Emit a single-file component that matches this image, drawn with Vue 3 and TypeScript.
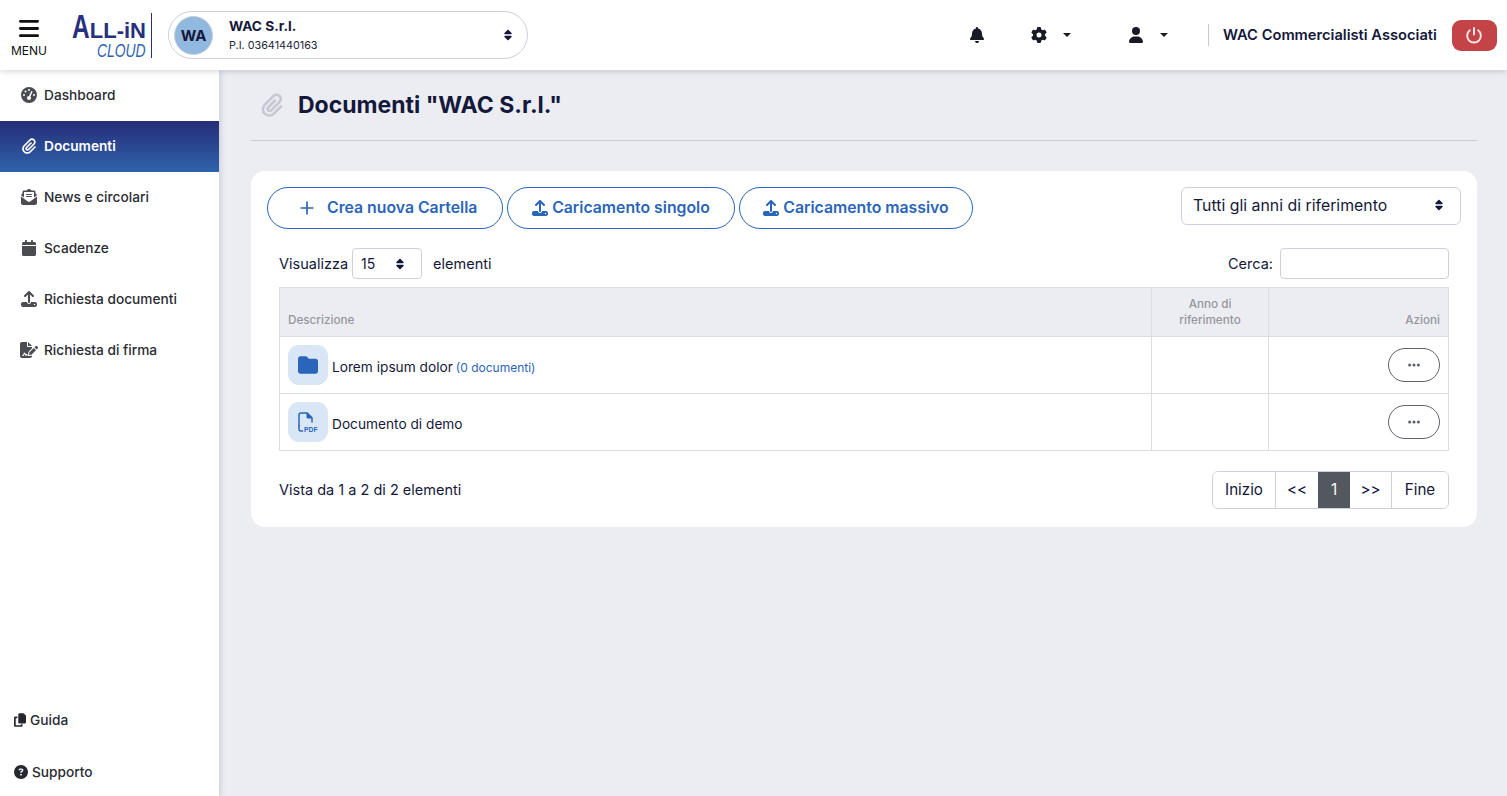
<script setup lang="ts">
const icons: Record<string, { box: string; d: string }> = {
  bars: { box: '0 0 448 512', d: 'M0 96C0 78.3 14.3 64 32 64H416c17.7 0 32 14.3 32 32s-14.3 32-32 32H32C14.3 128 0 113.7 0 96zM0 256c0-17.7 14.3-32 32-32H416c17.7 0 32 14.3 32 32s-14.3 32-32 32H32c-17.7 0-32-14.3-32-32zM448 416c0 17.7-14.3 32-32 32H32c-17.7 0-32-14.3-32-32s14.3-32 32-32H416c17.7 0 32 14.3 32 32z' },
  clip: { box: '0 0 448 512', d: 'M364.2 83.8c-24.4-24.4-64-24.4-88.4 0l-184 184c-42.1 42.1-42.1 110.3 0 152.4s110.3 42.1 152.4 0l152-152c10.9-10.9 28.7-10.9 39.6 0s10.9 28.7 0 39.6l-152 152c-64 64-167.6 64-231.6 0s-64-167.6 0-231.6l184-184c46.3-46.3 121.3-46.3 167.6 0s46.3 121.3 0 167.6l-176 176c-28.6 28.6-75 28.6-103.6 0s-28.6-75 0-103.6l144-144c10.9-10.9 28.7-10.9 39.6 0s10.9 28.7 0 39.6l-144 144c-6.7 6.7-6.7 17.7 0 24.4s17.7 6.7 24.4 0l176-176c24.4-24.4 24.4-64 0-88.4z' },
  bell: { box: '0 0 448 512', d: 'M224 0c-17.7 0-32 14.3-32 32V51.2C119 66 64 130.6 64 208v18.8c0 47-17.3 92.4-48.5 127.6l-7.4 8.3c-8.4 9.4-10.4 22.9-5.3 34.4S19.4 416 32 416H416c12.6 0 24-7.4 29.2-18.9s3.1-25-5.3-34.4l-7.4-8.3C401.3 319.2 384 273.9 384 226.8V208c0-77.4-55-142-128-156.8V32c0-17.7-14.3-32-32-32zm45.3 493.3c12-12 18.7-28.3 18.7-45.3H224 160c0 17 6.7 33.3 18.7 45.3s28.3 18.7 45.3 18.7s33.3-6.7 45.3-18.7z' },
  gear: { box: '0 0 512 512', d: 'M495.9 166.6c3.2 8.7 .5 18.4-6.4 24.6l-43.3 39.4c1.1 8.3 1.7 16.8 1.7 25.4s-.6 17.1-1.7 25.4l43.3 39.4c6.9 6.2 9.6 15.9 6.4 24.6c-4.4 11.9-9.7 23.3-15.8 34.3l-4.7 8.1c-6.6 11-14 21.4-22.1 31.2c-5.9 7.2-15.7 9.6-24.5 6.8l-55.7-17.7c-13.4 10.3-28.2 18.9-44 25.4l-12.5 57.1c-2 9.1-9 16.3-18.2 17.8c-13.8 2.3-28 3.5-42.5 3.5s-28.7-1.2-42.5-3.5c-9.2-1.5-16.2-8.7-18.2-17.8l-12.5-57.1c-15.8-6.5-30.6-15.1-44-25.4L83.1 425.9c-8.8 2.8-18.6 .3-24.5-6.8c-8.1-9.8-15.5-20.2-22.1-31.2l-4.7-8.1c-6.1-11-11.4-22.4-15.8-34.3c-3.2-8.7-.5-18.4 6.4-24.6l43.3-39.4C64.6 273.1 64 264.6 64 256s.6-17.1 1.7-25.4L22.4 191.2c-6.9-6.2-9.6-15.9-6.4-24.6c4.4-11.9 9.7-23.3 15.8-34.3l4.7-8.1c6.6-11 14-21.4 22.1-31.2c5.9-7.2 15.7-9.6 24.5-6.8l55.7 17.7c13.4-10.3 28.2-18.9 44-25.4l12.5-57.1c2-9.1 9-16.3 18.2-17.8C227.3 1.2 241.5 0 256 0s28.7 1.2 42.5 3.5c9.2 1.5 16.2 8.7 18.2 17.8l12.5 57.1c15.8 6.5 30.6 15.1 44 25.4l55.7-17.7c8.8-2.8 18.6-.3 24.5 6.8c8.1 9.8 15.5 20.2 22.1 31.2l4.7 8.1c6.1 11 11.4 22.4 15.8 34.3zM256 336a80 80 0 1 0 0-160 80 80 0 1 0 0 160z' },
  user: { box: '0 0 448 512', d: 'M224 256A128 128 0 1 0 224 0a128 128 0 1 0 0 256zm-45.7 48C79.8 304 0 383.8 0 482.3C0 498.7 13.3 512 29.7 512H418.3c16.4 0 29.7-13.3 29.7-29.7C448 383.8 368.2 304 269.7 304H178.3z' },
  folder: { box: '0 0 512 512', d: 'M64 480H448c35.3 0 64-28.7 64-64V160c0-35.3-28.7-64-64-64H288c-10.1 0-19.6-4.7-25.6-12.8L243.2 57.6C231.1 41.5 212.1 32 192 32H64C28.7 32 0 60.7 0 96V416c0 35.3 28.7 64 64 64z' },
  calendar: { box: '0 0 448 512', d: 'M96 32V64H48C21.5 64 0 85.5 0 112v48H448V112c0-26.5-21.5-48-48-48H352V32c0-17.7-14.3-32-32-32s-32 14.3-32 32V64H160V32c0-17.7-14.3-32-32-32S96 14.3 96 32zM448 192H0V464c0 26.5 21.5 48 48 48H400c26.5 0 48-21.5 48-48V192z' },
  gauge: { box: '0 0 512 512', d: 'M256 0a256 256 0 1 1 0 512A256 256 0 1 1 256 0zM288 96a32 32 0 1 0 -64 0 32 32 0 1 0 64 0zM256 416c35.3 0 64-28.7 64-64c0-17.4-6.9-33.1-18.1-44.6L366 161.7c5.3-12.1-.2-26.3-12.3-31.6s-26.3 .2-31.6 12.3L257.9 288c-.6 0-1.3 0-1.9 0c-35.3 0-64 28.7-64 64s28.7 64 64 64zM176 144a32 32 0 1 0 -64 0 32 32 0 1 0 64 0zM96 288a32 32 0 1 0 0-64 32 32 0 1 0 0 64zm352-32a32 32 0 1 0 -64 0 32 32 0 1 0 64 0z' },
  news: { box: '0 0 512 512', d: 'M215.4 96H144 107.8 96v8.8V144v40.4 89L.2 202.5c1.6-18.1 10.9-34.9 25.7-45.8L48 140.3V96c0-26.5 21.5-48 48-48h76.6l49.9-36.9C232.2 3.9 243.9 0 256 0s23.8 3.9 33.5 11L339.4 48H416c26.5 0 48 21.5 48 48v44.3l22.1 16.4c14.8 10.9 24.1 27.7 25.7 45.8L416 273.4v-89V144 104.8 96H404.2 368 296.6 215.4zM0 448V242.1L217.6 403.3c11.1 8.2 24.6 12.7 38.4 12.7s27.3-4.4 38.4-12.7L512 242.1V448v0c0 35.3-28.7 64-64 64H64c-35.3 0-64-28.7-64-64v0zM176 160H336c8.8 0 16 7.2 16 16s-7.2 16-16 16H176c-8.8 0-16-7.2-16-16s7.2-16 16-16zm0 64H336c8.8 0 16 7.2 16 16s-7.2 16-16 16H176c-8.8 0-16-7.2-16-16s7.2-16 16-16z' },
  upload: { box: '0 0 512 512', d: 'M288 109.3V352c0 17.7-14.3 32-32 32s-32-14.3-32-32V109.3l-73.4 73.4c-12.5 12.5-32.8 12.5-45.3 0s-12.5-32.8 0-45.3l128-128c12.5-12.5 32.8-12.5 45.3 0l128 128c12.5 12.5 12.5 32.8 0 45.3s-32.8 12.5-45.3 0L288 109.3zM64 352H192c0 35.3 28.7 64 64 64s64-28.7 64-64H448c35.3 0 64 28.7 64 64v32c0 35.3-28.7 64-64 64H64c-35.3 0-64-28.7-64-64V416c0-35.3 28.7-64 64-64zM432 456a24 24 0 1 0 0-48 24 24 0 1 0 0 48z' },
  sign: { box: '0 0 576 512', d: 'M64 0C28.7 0 0 28.7 0 64V448c0 35.3 28.7 64 64 64H320c35.3 0 64-28.7 64-64V428.7c-2.7 1.1-5.4 2-8.2 2.7l-60.1 15c-3 .7-6 1.2-9 1.3c-1.8 .2-3.6 .3-5.4 .3H256c-6.1 0-11.6-3.4-14.3-8.8l-8.8-17.7c-1.7-3.4-5.1-5.5-8.8-5.5s-7.2 2.1-8.8 5.5l-8.8 17.7c-2.9 5.9-9.2 9.4-15.7 8.8s-12.1-5.1-13.9-11.3L144 381l-9.8 32.8c-6.1 20.3-24.8 34.2-46 34.2H80c-8.8 0-16-7.2-16-16s7.2-16 16-16h8.2c7.1 0 13.3-4.6 15.3-11.4l14.9-49.5c3.4-11.3 13.8-19.1 25.6-19.1s22.2 7.8 25.6 19.1l11.6 38.6c7.4-6.2 16.8-9.7 26.8-9.7c15.9 0 30.4 9 37.5 23.2l4.4 8.8h8.9c-3.1-8.8-3.7-18.4-1.4-27.8l15-60.1c2.8-11.3 8.6-21.5 16.9-29.7L384 203.6V160H256c-17.7 0-32-14.3-32-32V0H64zM256 0V128H384L256 0zM549.8 139.7c-15.6-15.6-40.9-15.6-56.6 0l-29.4 29.4 71 71 29.4-29.4c15.6-15.6 15.6-40.9 0-56.6l-14.4-14.4zM311.9 321c-4.1 4.1-7 9.2-8.4 14.9l-15 60.1c-1.4 5.5 .2 11.2 4.2 15.2s9.7 5.6 15.2 4.2l60.1-15c5.6-1.4 10.8-4.3 14.9-8.4L512.1 262.7l-71-71L311.9 321z' },
  copy: { box: '0 0 448 512', d: 'M208 0H332.1c12.7 0 24.9 5.1 33.9 14.1l67.9 67.9c9 9 14.1 21.2 14.1 33.9V336c0 26.5-21.5 48-48 48H208c-26.5 0-48-21.5-48-48V48c0-26.5 21.5-48 48-48zM48 128h80v64H64V448H256V416h64v48c0 26.5-21.5 48-48 48H48c-26.5 0-48-21.5-48-48V176c0-26.5 21.5-48 48-48z' },
  help: { box: '0 0 512 512', d: 'M256 512A256 256 0 1 0 256 0a256 256 0 1 0 0 512zM169.8 165.3c7.9-22.3 29.1-37.3 52.8-37.3h58.3c34.9 0 63.1 28.3 63.1 63.1c0 22.6-12.1 43.5-31.7 54.8L280 264.4c-.2 13-10.9 23.6-24 23.6c-13.3 0-24-10.7-24-24V250.5c0-8.6 4.6-16.5 12.1-20.8l44.3-25.4c4.7-2.7 7.6-7.7 7.6-13.1c0-8.4-6.8-15.1-15.1-15.1H222.6c-3.4 0-6.4 2.1-7.5 5.3l-.4 1.2c-4.4 12.5-18.2 19-30.6 14.6s-19-18.2-14.6-30.6l.4-1.2zM224 352a32 32 0 1 1 64 0 32 32 0 1 1 -64 0z' },
  sort: { box: '0 0 320 512', d: 'M137.4 41.4c12.5-12.5 32.8-12.5 45.3 0l128 128c9.2 9.2 11.9 22.9 6.9 34.9s-16.6 19.8-29.6 19.8H32c-12.9 0-24.6-7.8-29.6-19.8s-2.2-25.7 6.9-34.9l128-128zm0 429.3l-128-128c-9.2-9.2-11.9-22.9-6.9-34.9s16.6-19.8 29.6-19.8H288c12.9 0 24.6 7.8 29.6 19.8s2.2 25.7-6.9 34.9l-128 128c-12.5 12.5-32.8 12.5-45.3 0z' },
  dots: { box: '0 0 448 512', d: 'M8 256a56 56 0 1 1 112 0A56 56 0 1 1 8 256zm160 0a56 56 0 1 1 112 0 56 56 0 1 1 -112 0zm216-56a56 56 0 1 1 0 112 56 56 0 1 1 0-112z' },
  plus: { box: '0 0 448 512', d: 'M224 64c-13 0-24 11-24 24V232H56c-13 0-24 11-24 24s11 24 24 24H200V424c0 13 11 24 24 24s24-11 24-24V280H392c13 0 24-11 24-24s-11-24-24-24H248V88c0-13-11-24-24-24z' }
}

const navItems = [
  { label: 'Dashboard', icon: 'gauge' },
  { label: 'Documenti', icon: 'clip', active: true },
  { label: 'News e circolari', icon: 'news' },
  { label: 'Scadenze', icon: 'calendar' },
  { label: 'Richiesta documenti', icon: 'upload' },
  { label: 'Richiesta di firma', icon: 'sign' }
]
const pages = [
  { label: 'Inizio', w: 62 },
  { label: '<<', w: 43 },
  { label: '1', w: 32, active: true },
  { label: '>>', w: 41 },
  { label: 'Fine', w: 57 }
]
</script>

<template>
  <div class="app">
    <header class="topbar">
      <div class="menu">
        <svg class="menu-icon" :viewBox="icons.bars.box"><path :d="icons.bars.d" /></svg>
        <span>MENU</span>
      </div>
      <div class="logo">
        <div class="logo-main"><span class="logo-a">A</span>LL-iN</div>
        <div class="logo-sub"><span>CLOUD</span></div>
      </div>
      <div class="company">
        <div class="avatar">WA</div>
        <div class="company-text">
          <strong>WAC S.r.l.</strong>
          <small>P.I. 03641440163</small>
        </div>
        <svg class="sort company-sort" :viewBox="icons.sort.box"><path :d="icons.sort.d" /></svg>
      </div>
      <div class="top-actions">
        <svg class="top-icon bell" :viewBox="icons.bell.box"><path :d="icons.bell.d" /></svg>
        <svg class="top-icon gear" :viewBox="icons.gear.box"><path :d="icons.gear.d" /></svg>
        <i class="caret gear-caret"></i>
        <svg class="top-icon user" :viewBox="icons.user.box"><path :d="icons.user.d" /></svg>
        <i class="caret user-caret"></i>
        <div class="studio">WAC Commercialisti Associati</div>
        <button class="power" aria-label="Esci">
          <svg viewBox="0 0 24 24"><path d="M12 3.500v8M7 6.400a8.200 8.200 0 1 0 10 0" /></svg>
        </button>
      </div>
    </header>

    <div class="body">
      <aside class="sidebar">
        <nav>
          <a v-for="item in navItems" :key="item.label" class="nav-item" :class="{ active: item.active }">
            <svg class="nav-icon" :class="'ni-' + item.icon" :viewBox="icons[item.icon].box"><path :d="icons[item.icon].d" /></svg>
            <span>{{ item.label }}</span>
          </a>
        </nav>
        <div class="side-foot">
          <a class="foot-item">
            <svg class="guide-icon" :viewBox="icons.copy.box"><path :d="icons.copy.d" /></svg>
            <span>Guida</span>
          </a>
          <a class="foot-item">
            <svg class="help-icon" :viewBox="icons.help.box"><path :d="icons.help.d" /></svg>
            <span>Supporto</span>
          </a>
        </div>
      </aside>

      <main class="main">
        <div class="page-head">
          <svg class="head-icon" :viewBox="icons.clip.box"><path :d="icons.clip.d" /></svg>
          <h1>Documenti "WAC S.r.l."</h1>
        </div>
        <section class="card">
          <div class="toolbar">
            <button class="pill first">
              <svg class="plus" :viewBox="icons.plus.box"><path :d="icons.plus.d" /></svg>
              <span>Crea nuova Cartella</span>
            </button>
            <button class="pill second">
              <svg class="up" :viewBox="icons.upload.box"><path :d="icons.upload.d" /></svg>
              <span>Caricamento singolo</span>
            </button>
            <button class="pill third">
              <svg class="up" :viewBox="icons.upload.box"><path :d="icons.upload.d" /></svg>
              <span>Caricamento massivo</span>
            </button>
            <div class="year-select">
              <span>Tutti gli anni di riferimento</span>
              <svg class="sort" :viewBox="icons.sort.box"><path :d="icons.sort.d" /></svg>
            </div>
          </div>

          <div class="table-wrap">
            <div class="controls">
              <div class="length">
                <span>Visualizza</span>
                <div class="length-select">
                  <span>15</span>
                  <svg class="sort" :viewBox="icons.sort.box"><path :d="icons.sort.d" /></svg>
                </div>
                <span class="len-after">elementi</span>
              </div>
              <label class="search">
                <span>Cerca:</span>
                <input type="text" />
              </label>
            </div>

            <table>
              <colgroup>
                <col class="c1" />
                <col class="c2" />
                <col />
              </colgroup>
              <thead>
                <tr>
                  <th>Descrizione</th>
                  <th class="center">Anno di<br />riferimento</th>
                  <th class="right">Azioni</th>
                </tr>
              </thead>
              <tbody>
                <tr>
                  <td>
                    <div class="doc">
                      <div class="doc-icon">
                        <svg class="folder" :viewBox="icons.folder.box"><path :d="icons.folder.d" /></svg>
                      </div>
                      <span class="doc-name">Lorem ipsum dolor</span>
                      <a class="count">(0 documenti)</a>
                    </div>
                  </td>
                  <td></td>
                  <td class="right">
                    <button class="more"><svg :viewBox="icons.dots.box"><path :d="icons.dots.d" /></svg></button>
                  </td>
                </tr>
                <tr>
                  <td>
                    <div class="doc">
                      <div class="doc-icon">
                        <svg class="pdf" viewBox="0 0 20 20">
                          <path class="pdf-line" d="M1 14V3a2 2 0 0 1 2-2h6l5 5v4" />
                          <path class="pdf-fill" d="M8.500 .500h1L14.500 5.500v1H10a1.500 1.500 0 0 1-1.500-1.500z" />
                          <path class="pdf-line" d="M1 14v3a2 2 0 0 0 2 2h1.500" />
                          <text x="6" y="19.800" class="pdf-text" textLength="13.500" lengthAdjust="spacingAndGlyphs">PDF</text>
                        </svg>
                      </div>
                      <span class="doc-name">Documento di demo</span>
                    </div>
                  </td>
                  <td></td>
                  <td class="right">
                    <button class="more"><svg :viewBox="icons.dots.box"><path :d="icons.dots.d" /></svg></button>
                  </td>
                </tr>
              </tbody>
            </table>

            <div class="foot">
              <span>Vista da 1 a 2 di 2 elementi</span>
              <div class="pager">
                <button
                  v-for="p in pages"
                  :key="p.label"
                  :class="{ active: p.active }"
                  :style="{ width: p.w + 'px' }"
                >{{ p.label }}</button>
              </div>
            </div>
          </div>
        </section>
      </main>
    </div>
  </div>
</template>

<style>
html, body { margin: 0; background: #ecedf3; }
</style>

<style scoped>
* { box-sizing: border-box; }
.app {
  height: 100vh;
  min-height: 796px;
  overflow: hidden;
  display: flex;
  flex-direction: column;
  font-family: Inter, "Liberation Sans", sans-serif;
  color: #14183a;
  background: #ecedf3;
}
svg { display: block; fill: currentColor; }

.topbar {
  height: 70px;
  flex: none;
  display: flex;
  align-items: center;
  background: #fff;
  box-shadow: 0 1px 6px rgba(40, 44, 70, 0.22);
  position: relative;
  z-index: 3;
}
.menu {
  width: 58px;
  flex: none;
  display: flex;
  flex-direction: column;
  align-items: center;
  color: #111;
  font-size: 12px;
  line-height: 14px;
  padding-top: 4px;
}
.menu-icon { width: 20px; height: 23px; margin-bottom: 4px; }
.logo {
  width: 94px;
  height: 45px;
  flex: none;
  margin: 0 16px 0 0;
  padding-right: 5px;
  border-right: 1px solid #27307c;
  font-family: "Liberation Sans", sans-serif;
  text-align: right;
}
.logo-main {
  height: 28px;
  color: #27307c;
  font-size: 22px;
  line-height: 35px;
  font-weight: 700;
  white-space: nowrap;
}
.logo-a {
  display: inline-block;
  width: 18px;
  font-size: 34px;
  line-height: 0;
  text-align: left;
  transform: scaleX(0.72);
  transform-origin: 0 50%;
}
.logo-sub {
  height: 17px;
  color: #2d64b4;
  font-size: 19px;
  line-height: 19px;
  font-style: italic;
}
.logo-sub span { display: inline-block; transform: scaleX(0.73); transform-origin: 100% 50%; }
.company {
  width: 360px;
  height: 48px;
  flex: none;
  display: flex;
  align-items: center;
  border: 1px solid #ced0db;
  border-radius: 24px;
  padding: 0 15px 0 5px;
}
.avatar {
  width: 39px;
  height: 39px;
  flex: none;
  border-radius: 50%;
  background: #91b8de;
  border: 1px solid #c7cede;
  display: flex;
  align-items: center;
  justify-content: center;
  font-size: 15px;
  font-weight: 700;
}
.company-text {
  flex: 1;
  display: flex;
  flex-direction: column;
  padding-left: 16px;
}
.company-text strong { font-size: 13.7px; line-height: 20px; font-weight: 700; }
.company-text small { font-size: 10.8px; line-height: 16px; margin-top: 2px; color: #1c1f38; }
.sort { width: 8px; height: 12px; flex: none; color: #14183a; }

.top-actions {
  flex: 1;
  display: flex;
  align-items: center;
  height: 100%;
  color: #1a1a24;
}
.top-icon { flex: none; }
.bell { width: 14px; height: 16px; margin-left: 442px; }
.gear { width: 16px; height: 16px; margin-left: 47px; }
.caret {
  width: 0;
  height: 0;
  flex: none;
  border: 4px solid transparent;
  border-top-color: #1a1a24;
  border-bottom: 0;
}
.gear-caret { margin-left: 16px; }
.user { width: 14px; height: 16px; margin-left: 58px; }
.user-caret { margin-left: 17px; }
.studio {
  margin-left: 40px;
  height: 22px;
  border-left: 1px solid #c8c9d0;
  padding-left: 14px;
  font-size: 14.7px;
  line-height: 22px;
  font-weight: 600;
  color: #14183a;
  white-space: nowrap;
}
.power {
  width: 45px;
  height: 31px;
  flex: none;
  margin-left: 15px;
  border: 0;
  padding: 0;
  border-radius: 9px;
  background: #c44346;
  display: flex;
  align-items: center;
  justify-content: center;
}
.power svg { width: 20px; height: 20px; fill: none; stroke: #fbeaea; stroke-width: 2.300; stroke-linecap: round; }

.body { flex: 1; display: flex; min-height: 0; }
.sidebar {
  width: 219px;
  flex: none;
  display: flex;
  flex-direction: column;
  justify-content: space-between;
  background: #fff;
  box-shadow: 1px 0 6px rgba(40, 44, 70, 0.2);
  position: relative;
  z-index: 2;
}
.nav-item {
  height: 51px;
  display: flex;
  align-items: center;
  gap: 7px;
  padding-left: 21px;
  padding-bottom: 1px;
  font-size: 13.7px;
  font-weight: 500;
  color: #2a2b33;
}
.nav-icon { width: 16px; height: 16px; flex: none; color: #4b4b52; }
.ni-sign { width: 18px; margin: 0 -1px; }
.nav-item.active {
  color: #fff;
  font-weight: 600;
  background: linear-gradient(180deg, #262d78 0%, #2f62ab 100%);
}
.nav-item.active .nav-icon { color: #fff; }
.side-foot { display: flex; flex-direction: column; margin-bottom: -2px; }
.foot-item {
  height: 52px;
  display: flex;
  align-items: center;
  padding-left: 14px;
  font-size: 13.7px;
  font-weight: 500;
  color: #2a2b33;
}
.guide-icon { width: 12px; height: 14px; margin-right: 4px; color: #26262e; }
.help-icon { width: 14px; height: 14px; margin-right: 4px; color: #26262e; }

.main { flex: 1; min-width: 0; padding: 0 30px 0 32px; }
.page-head {
  height: 71px;
  display: flex;
  align-items: center;
  padding-left: 10px;
  padding-bottom: 1px;
  border-bottom: 1px solid #c9cad2;
}
.head-icon { width: 22px; height: 24px; flex: none; color: #c6c8d2; }
h1 {
  margin: 0 0 0 15px;
  font-size: 23px;
  line-height: 32px;
  font-weight: 700;
  color: #14183a;
}
.card {
  margin-top: 30px;
  height: 356px;
  padding: 16px;
  background: #fff;
  border-radius: 14px;
}
.toolbar { display: flex; align-items: flex-start; gap: 4px; }
.pill {
  height: 42px;
  flex: none;
  display: flex;
  align-items: center;
  justify-content: center;
  background: #fff;
  color: #2b65b9;
  border: 1px solid #2b65b9;
  border-radius: 21px;
  padding: 0;
  font-family: inherit;
  font-size: 15.8px;
  font-weight: 600;
}
.pill span { padding-bottom: 2px; }
.first { width: 236px; gap: 12px; justify-content: flex-start; padding-left: 31px; }
.second { width: 228px; gap: 4px; }
.third { width: 234px; gap: 4px; }
.plus { width: 16px; height: 18px; }
.up { width: 16px; height: 16px; }
.year-select {
  width: 280px;
  height: 38px;
  margin-left: auto;
  display: flex;
  align-items: center;
  justify-content: space-between;
  border: 1px solid #ced0db;
  border-radius: 6px;
  padding: 0 17px 2px 11px;
  font-size: 15.85px;
}
.table-wrap { padding: 0 12px; margin-top: 19px; }
.controls {
  height: 31px;
  display: flex;
  align-items: center;
  justify-content: space-between;
  font-size: 14.5px;
}
.length { display: flex; align-items: center; }
.length-select {
  width: 70px;
  height: 31px;
  margin-left: 4px;
  display: flex;
  align-items: center;
  justify-content: space-between;
  border: 1px solid #ced0db;
  border-radius: 4px;
  padding: 0 17px 0 8px;
  font-size: 14px;
}
.len-after { margin-left: 11px; }
.search { display: flex; align-items: center; gap: 7px; }
.search input {
  width: 169px;
  height: 31px;
  border: 1px solid #ced0db;
  border-radius: 4px;
  background: #fff;
  outline: 0;
}
table {
  width: 100%;
  margin-top: 8px;
  border-collapse: collapse;
  table-layout: fixed;
  font-size: 13.7px;
}
.c1 { width: 872px; }
.c2 { width: 117px; }
th, td { border: 1px solid #dcdde3; padding: 0 8px; }
th {
  height: 49px;
  background: #ecedf3;
  color: #94959c;
  font-size: 11.7px;
  line-height: 16px;
  font-weight: 500;
  text-align: left;
  vertical-align: bottom;
  padding-bottom: 8px;
}
.center { text-align: center; }
.right { text-align: right; }
td { height: 57px; vertical-align: middle; }
.doc { display: flex; align-items: center; }
.doc-icon {
  width: 40px;
  height: 40px;
  flex: none;
  margin-right: 4px;
  border-radius: 11px;
  background: #d8e6f5;
  display: flex;
  align-items: center;
  justify-content: center;
  color: #2b65b9;
}
.doc-name, .count { padding-top: 4px; }
.folder { width: 20px; height: 20px; }
.pdf { width: 20px; height: 20px; overflow: visible; }
.pdf-line { fill: none; stroke: #2b65b9; stroke-width: 1.500; stroke-linecap: round; }
.pdf-fill { fill: #2b65b9; }
.pdf-text { fill: #2b65b9; font-size: 8px; font-weight: 700; font-family: "Liberation Sans", sans-serif; }
.count { margin-left: 3px; font-size: 12px; color: #2b65b9; }
.more {
  width: 52px;
  height: 34px;
  padding: 0;
  background: #fff;
  border: 1px solid #5f636b;
  border-radius: 17px;
  display: inline-flex;
  align-items: center;
  justify-content: center;
  vertical-align: middle;
  color: #5f636b;
}
.more svg { width: 14px; height: 14px; }
.foot {
  margin-top: 20px;
  display: flex;
  align-items: center;
  justify-content: space-between;
  font-size: 14.5px;
}
.foot > span { padding-bottom: 2px; }
.pager {
  display: flex;
  height: 38px;
  border: 1px solid #ced0db;
  border-radius: 6px;
  overflow: hidden;
}
.pager button {
  flex: none;
  padding: 0 0 2px;
  border: 0;
  border-left: 1px solid #ced0db;
  background: #fff;
  color: #14183a;
  font-family: inherit;
  font-size: 15.2px;
}
.pager button:first-child { border-left: 0; }
.pager button.active { background: #53575e; color: #fff; border-left: 0; }
.pager button.active + button { border-left: 0; }
</style>
